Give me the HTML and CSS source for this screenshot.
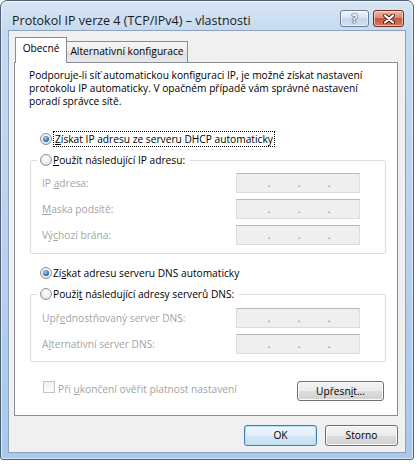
FILE: index.html
```html
<!DOCTYPE html>
<html lang="cs">
<head>
  <meta charset="UTF-8" />
  <meta name="viewport" content="width=device-width, initial-scale=1.0"/>
  <title>Protokol IP verze 4 (TCP/IPv4) – vlastnosti</title>
  <link rel="stylesheet" href="styles.css">
</head>
<body>
  <div class="window">
    <div class="titlebar">
      <div class="title">Protokol IP verze 4 (TCP/IPv4) – vlastnosti</div>
      <div class="caption-buttons">
        <div class="cap-btn help">?</div>
        <div class="cap-btn close">
          <svg width="14" height="10" viewBox="0 0 14 10">
            <path d="M3 1.5 L11 8.5 M11 1.5 L3 8.5" stroke="#4b1c12" stroke-width="4" stroke-linecap="round"/>
            <path d="M3 1.5 L11 8.5 M11 1.5 L3 8.5" stroke="#fff" stroke-width="2.2" stroke-linecap="round"/>
          </svg>
        </div>
      </div>
    </div>

    <div class="client">
      <div class="tabs">
        <div class="tab active">Obecné</div>
        <div class="tab">Alternativní konfigurace</div>
      </div>

      <div class="panel">
        <p class="intro">Podporuje-li síť automatickou konfiguraci IP, je možné získat nastavení<br>protokolu IP automaticky. V opačném případě vám správné nastavení<br>poradí správce sítě.</p>

        <div class="option first">
          <span class="radio checked"></span>
          <span class="focus"><u>Z</u>ískat IP adresu ze serveru DHCP automaticky</span>
        </div>

        <fieldset class="group">
          <legend class="option">
            <span class="radio"></span>
            <span><u>P</u>oužít následující IP adresu:</span>
          </legend>
          <div class="row">
            <span class="label">IP <u>a</u>dresa:</span>
            <div class="ip"><span>.</span><span>.</span><span>.</span></div>
          </div>
          <div class="row">
            <span class="label"><u>M</u>aska podsítě:</span>
            <div class="ip"><span>.</span><span>.</span><span>.</span></div>
          </div>
          <div class="row">
            <span class="label">Vý<u>c</u>hozí brána:</span>
            <div class="ip"><span>.</span><span>.</span><span>.</span></div>
          </div>
        </fieldset>

        <div class="option third">
          <span class="radio checked"></span>
          <span>Zí<u>s</u>kat adresu serveru DNS automaticky</span>
        </div>

        <fieldset class="group dns">
          <legend class="option">
            <span class="radio"></span>
            <span>Použi<u>t</u> následující adresy serverů DNS:</span>
          </legend>
          <div class="row">
            <span class="label">Upř<u>e</u>dnostňovaný server DNS:</span>
            <div class="ip"><span>.</span><span>.</span><span>.</span></div>
          </div>
          <div class="row">
            <span class="label">A<u>l</u>ternativní server DNS:</span>
            <div class="ip"><span>.</span><span>.</span><span>.</span></div>
          </div>
        </fieldset>

        <div class="check-row">
          <div class="check">
            <span class="box"></span>
            <span class="label">Při <u>u</u>končení ověřit platnost nastavení</span>
          </div>
          <button class="btn advanced">Upřesn<u>i</u>t...</button>
        </div>
      </div>

      <div class="actions">
        <button class="btn default">OK</button>
        <button class="btn">Storno</button>
      </div>
    </div>
  </div>
</body>
</html>
```

FILE: styles.css
```css
body {
  margin: 0;
  background: #fff;
  font-family: "Open Sans", "Noto Sans", sans-serif;
  font-size: 10.2px;
  color: #000;
}

.window {
  width: 414px;
  height: 460px;
  box-sizing: border-box;
  border: 1px solid #4f5f75;
  border-radius: 7px 7px 3px 3px;
  padding: 0 7px 6px 7px;
  display: flex;
  flex-direction: column;
  background: linear-gradient(to bottom, #d8e6f5 0, #c6daef 30px, #b7d0ed 60%, #aac8eb 100%);
  box-shadow: inset 0 0 0 1px rgba(255, 255, 255, 0.55);
}

/* title bar */

.titlebar {
  height: 29px;
  display: flex;
  justify-content: space-between;
  align-items: flex-start;
}

.title {
  margin: 12px 0 0 4px;
  font-size: 12.5px;
  line-height: 16px;
  color: #1b1b1b;
}

.caption-buttons {
  display: flex;
  gap: 4px;
  margin: 9px 2px 0 0;
}

.cap-btn {
  height: 17px;
  box-sizing: border-box;
  border: 1px solid #6c7e97;
  border-radius: 3px;
  display: flex;
  align-items: center;
  justify-content: center;
  box-shadow: inset 0 0 0 1px rgba(255, 255, 255, 0.5);
}

.help {
  width: 29px;
  background: linear-gradient(#eef3fa, #dbe6f3 45%, #c5d6eb 50%, #d0def0);
  color: #fff;
  font-size: 12px;
  font-weight: bold;
  line-height: 15px;
  text-shadow: 0 0 1px #33465f, 0 0 1px #33465f, 0 0 2px #33465f;
}

.close {
  width: 31px;
  border-color: #702c1f;
  background: linear-gradient(#ebb6a7, #db8b77 45%, #c9553b 50%, #d77a5f);
}

/* client area */

.client {
  flex: 1;
  background: #f0f0f0;
  border: 1px solid #8ea2bc;
  display: flex;
  flex-direction: column;
}

.tabs {
  display: flex;
  align-items: flex-end;
  height: 26px;
  margin: 6px 0 -1px 6px;
}

.tab {
  width: 121px;
  height: 22px;
  box-sizing: border-box;
  border: 1px solid #898c95;
  border-left: none;
  border-bottom: none;
  text-align: center;
  line-height: 19px;
  white-space: nowrap;
  background: linear-gradient(#f5f5f5, #ececec 50%, #e0e0e0 50%, #e8e8e8);
}

.tab.active {
  width: 52px;
  height: 26px;
  border-left: 1px solid #898c95;
  background: #fff;
  line-height: 20px;
  position: relative;
  z-index: 1;
}

.panel {
  width: 384px;
  height: 354px;
  margin-left: 5px;
  box-sizing: border-box;
  border: 1px solid #898c95;
  background: #fff;
  padding: 6px 0 0 14px;
}

.intro {
  margin: 0;
  line-height: 13px;
  white-space: nowrap;
}

/* radio options */

.option {
  display: flex;
  align-items: center;
  gap: 1px;
  height: 16px;
  white-space: nowrap;
}

.option.first {
  margin: 23px 0 0 11px;
}

.option.third {
  margin: 11px 0 0 11px;
}

.radio {
  width: 12px;
  height: 12px;
  box-sizing: border-box;
  border-radius: 50%;
  border: 1px solid #929292;
  background: radial-gradient(circle at 50% 35%, #ffffff, #ececec 55%, #cfcfcf);
  display: flex;
  align-items: center;
  justify-content: center;
}

.radio.checked::after {
  content: "";
  width: 6px;
  height: 6px;
  border-radius: 50%;
  background: radial-gradient(circle at 40% 35%, #a7d2f3, #2f6db6 60%, #1a4a86);
}

.focus {
  border: 1px dotted #000;
  padding: 0 1px;
  line-height: 14px;
}

u {
  text-underline-offset: 1px;
}

/* group boxes */

.group {
  width: 356px;
  box-sizing: border-box;
  margin: 5px 0 0 1px;
  padding: 5px 25px 8px 11px;
  border: 1px solid #d5dfe5;
  border-radius: 3px;
}

.group.dns {
  padding-top: 6px;
  padding-bottom: 7px;
}

.group legend {
  margin-left: -5px;
  padding: 0 5px 0 3px;
}

.row {
  display: flex;
  justify-content: space-between;
  align-items: center;
  height: 20px;
  color: #a3a3a3;
}

.row + .row {
  margin-top: 6px;
}

.ip {
  width: 124px;
  height: 20px;
  box-sizing: border-box;
  border: 1px solid #dcdcdc;
  border-top-color: #b7b7b7;
  background: #efefef;
  padding-left: 17px;
  display: flex;
  color: #707070;
  line-height: 18px;
}

.ip span {
  width: 30px;
  text-align: center;
}

/* bottom of panel */

.check-row {
  width: 355px;
  margin-top: 19px;
  display: flex;
  justify-content: space-between;
  align-items: flex-start;
}

.check {
  display: flex;
  align-items: flex-start;
  gap: 3px;
  padding-left: 14px;
  color: #a3a3a3;
  line-height: 16px;
}

.box {
  width: 12px;
  height: 12px;
  box-sizing: border-box;
  border: 1px solid #c4c4c4;
  background: linear-gradient(#f2f2f2, #fcfcfc);
}

.btn {
  height: 21px;
  box-sizing: border-box;
  border: 1px solid #707070;
  border-radius: 3px;
  padding: 0;
  font: inherit;
  color: #000;
  line-height: 19px;
  text-align: center;
  background: linear-gradient(#f3f3f3, #ebebeb 50%, #dddddd 50%, #d0d0d0);
  box-shadow: inset 0 0 0 1px #fbfbfb;
}

.btn.advanced {
  width: 87px;
  height: 20px;
  line-height: 18px;
}

.actions {
  display: flex;
  justify-content: flex-end;
  gap: 8px;
  margin: 9px 7px 0 0;
}

.actions .btn {
  width: 73px;
}

.btn.default {
  border-color: #3c7fb1;
  background: linear-gradient(#eef6fb, #e2eff8 50%, #d3e6f3 50%, #c9e0f0);
  box-shadow: inset 0 0 0 1px #b9e2f7;
}
```
